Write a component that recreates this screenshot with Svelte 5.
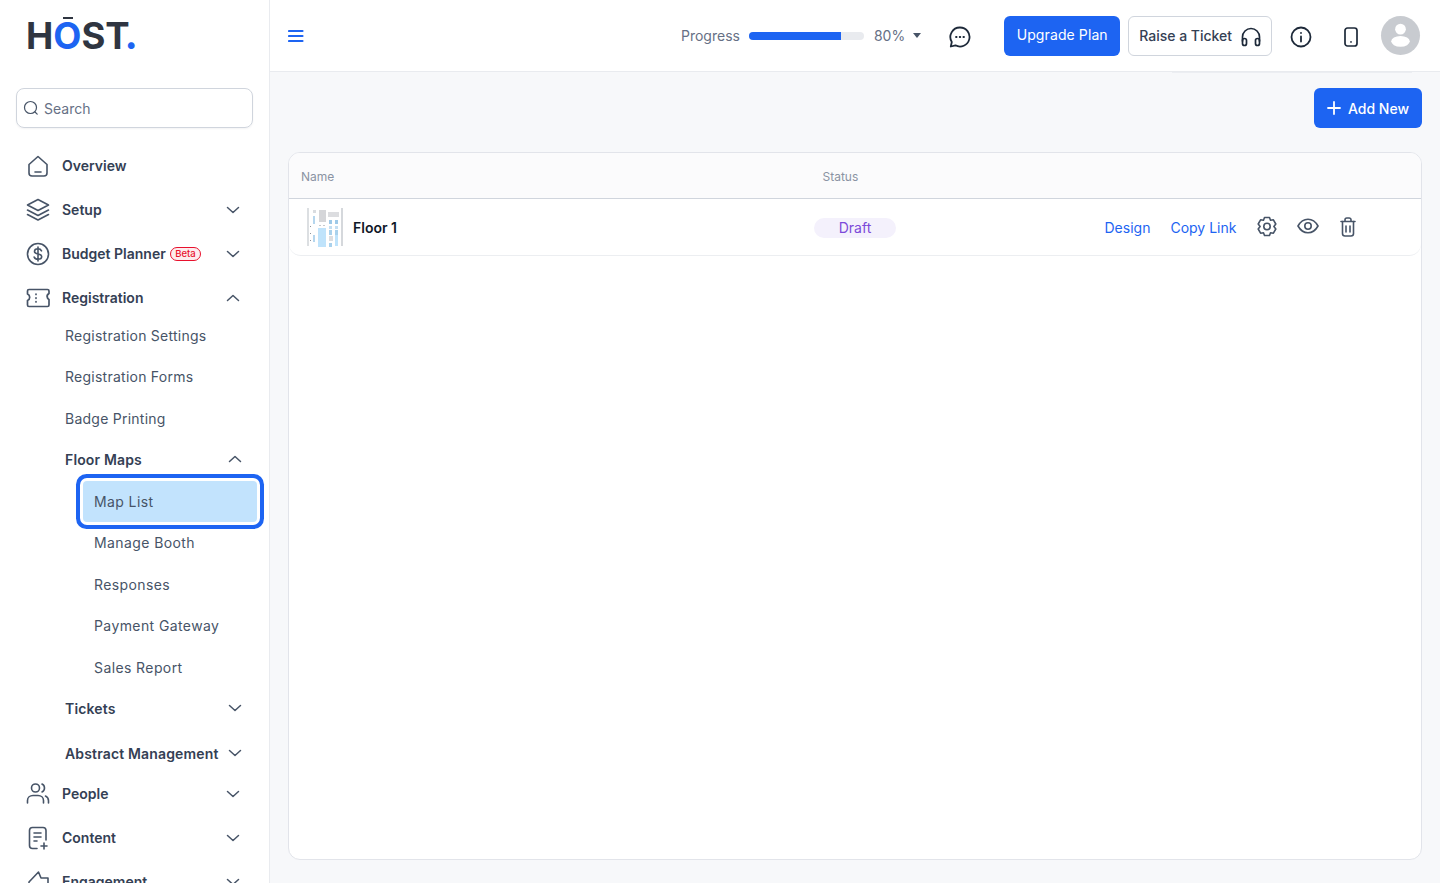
<script>
  const subItems = ["Registration Settings", "Registration Forms", "Badge Printing"];
  const mapItems = ["Manage Booth", "Responses", "Payment Gateway", "Sales Report"];
</script>

{#snippet chevron(up)}
  <svg class="chev" class:up width="16" height="16" viewBox="0 0 16 16" fill="none" stroke="#475467" stroke-width="1.5" stroke-linecap="round" stroke-linejoin="round"><path d="M2.5 5.5 8 10.5l5.5-5" /></svg>
{/snippet}

<div class="page">
  <aside class="sidebar">
    <div class="logo"><span>H</span><span class="o">O</span><span>S</span><span class="t">T</span><span class="dot">.</span></div>

    <div class="search">
      <svg width="16" height="16" viewBox="0 0 16 16" fill="none" stroke="#475467" stroke-width="1.2" stroke-linecap="round"><circle cx="7.5" cy="7.5" r="6" /><path d="m12 12 2.2 2.2" /></svg>
      <span>Search</span>
    </div>

    <nav>
      <div class="item">
        <svg class="ico" width="24" height="24" viewBox="0 0 24 24" fill="none" stroke="#475467" stroke-width="1.6" stroke-linecap="round" stroke-linejoin="round"><path d="M3 10.500 12 2.500l9 8V19a3 3 0 0 1-3 3H6a3 3 0 0 1-3-3z" /><path d="M9 18h6" /></svg>
        <span class="label">Overview</span>
      </div>
      <div class="item">
        <svg class="ico" width="24" height="24" viewBox="0 0 24 24" fill="none" stroke="#475467" stroke-width="1.6" stroke-linejoin="round" stroke-linecap="round"><path d="M12 1.500 1.500 7 12 12.500 22.500 7z" /><path d="M1.500 12 12 17.500 22.500 12" /><path d="M1.500 16.500 12 22l10.500-5.500" /></svg>
        <span class="label">Setup</span>
        {@render chevron(false)}
      </div>
      <div class="item">
        <svg class="ico" width="24" height="24" viewBox="0 0 24 24" fill="none" stroke="#475467" stroke-width="1.6" stroke-linecap="round"><circle cx="12" cy="12" r="10.500" /><path d="M15.500 8.800c-.6-1.300-2-2-3.500-2-2 0-3.500 1-3.500 2.600 0 3.600 7.200 1.600 7.200 5.200 0 1.700-1.600 2.700-3.700 2.700-1.700 0-3.200-.8-3.800-2.200M12 5v14" /></svg>
        <span class="label">Budget Planner</span>
        <span class="beta">Beta</span>
        {@render chevron(false)}
      </div>
      <div class="item">
        <svg class="ico" width="24" height="24" viewBox="0 0 24 24" fill="none" stroke="#475467" stroke-width="1.7" stroke-linejoin="round" stroke-linecap="round"><path d="M3 3.500h18.500a1.500 1.500 0 0 1 1.500 1.500v2.500a3.500 3.500 0 0 0-1.500 4.500 3.500 3.500 0 0 0 1.500 1.500V19a1.500 1.500 0 0 1-1.500 1.500H3A1.500 1.500 0 0 1 1.500 19v-4.500a3.500 3.500 0 0 0 0-6.500V5A1.500 1.500 0 0 1 3 3.500z" /><path d="M10 8v.5M10 11.800v.5M10 15.500v.5" /></svg>
        <span class="label">Registration</span>
        {@render chevron(true)}
      </div>

      <div class="sub">
        {#each subItems as label}
          <div class="sub-row">{label}</div>
        {/each}
        <div class="sub-row strong">Floor Maps {@render chevron(true)}</div>

        <div class="map-row"><div class="active">Map List</div></div>
        {#each mapItems as label}
          <div class="map-row"><div class="leaf">{label}</div></div>
        {/each}

        <div class="sub-row strong">Tickets {@render chevron(false)}</div>
        <div class="sub-row strong abstract">Abstract Management {@render chevron(false)}</div>
      </div>

      <div class="item people">
        <svg class="ico" width="24" height="24" viewBox="0 0 24 24" fill="none" stroke="#475467" stroke-width="1.6" stroke-linecap="round"><circle cx="9.500" cy="6" r="4" /><path d="M1.500 21v-2.500c0-3 2.500-5 5.500-5h5c3 0 5.500 2 5.500 5V21" /><path d="M16 2c1.500.7 2.500 2.200 2.500 4s-1 3.300-2.500 4M19.500 14c1.800.8 3 2.600 3 4.800V21" /></svg>
        <span class="label">People</span>
        {@render chevron(false)}
      </div>
      <div class="item">
        <svg class="ico" width="24" height="24" viewBox="0 0 24 24" fill="none" stroke="#475467" stroke-width="1.6" stroke-linecap="round" stroke-linejoin="round"><path d="M11 22.500H6.500a3 3 0 0 1-3-3v-15a3 3 0 0 1 3-3H17a3 3 0 0 1 3 3V14" /><path d="M8 7h7M8 11h7M8 15h3M18 17v6M15 20h6" /></svg>
        <span class="label">Content</span>
        {@render chevron(false)}
      </div>
      <div class="item">
        <svg class="ico" width="24" height="24" viewBox="0 0 24 24" fill="none" stroke="#475467" stroke-width="1.6" stroke-linecap="round" stroke-linejoin="round"><path d="M3 12 12.500 2l2.500 6h7v12H3z" /></svg>
        <span class="label">Engagement</span>
        {@render chevron(false)}
      </div>
    </nav>
  </aside>

  <div class="content">
    <header class="topbar">
      <svg class="burger" width="16" height="14" viewBox="0 0 16 14" fill="none" stroke="#1d64f2" stroke-width="2.200" stroke-linecap="round"><path d="M1 2h13.500M1 7h13.500M1 12h13.500" /></svg>

      <span class="progress-label">Progress</span>
      <div class="track"><div class="fill" style="width: 80%"></div></div>
      <span class="pct">80%</span>
      <span class="caret"></span>

      <svg class="chat" width="22" height="22" viewBox="0 0 22 22" fill="none" stroke="#1d2939" stroke-width="1.800" stroke-linejoin="round"><path d="M11 1.500a9.500 9.500 0 1 1-4.600 17.800L1.800 20.500l1-4.500A9.500 9.500 0 0 1 11 1.500z" /><path d="M7 11h.6M10.700 11h.6M14.400 11h.6" stroke-linecap="round" /></svg>

      <button class="upgrade">Upgrade Plan</button>
      <button class="ticket">
        Raise a Ticket
        <svg width="20" height="20" viewBox="0 0 20 20" fill="none" stroke="#1d2939" stroke-width="1.700" stroke-linecap="round"><path d="M1.500 14v-4a8.500 8.500 0 0 1 17 0v4" /><rect x="1.500" y="11.500" width="4" height="7" rx="2" /><rect x="14.500" y="11.500" width="4" height="7" rx="2" /></svg>
      </button>

      <svg class="info" width="22" height="22" viewBox="0 0 22 22" fill="none" stroke="#1d2939" stroke-width="1.800" stroke-linecap="round"><circle cx="11" cy="11" r="9.500" /><path d="M11 10.500v5M11 6.800v.2" /></svg>
      <svg class="phone" width="14" height="20" viewBox="0 0 14 20" fill="none" stroke="#1d2939" stroke-width="1.700" stroke-linecap="round"><rect x="1" y="1" width="12" height="18" rx="2.500" /><path d="M7 14.800v.2" /></svg>

      <div class="avatar">
        <svg width="39" height="39" viewBox="0 0 40 40" fill="#fff"><circle cx="20" cy="13.500" r="5.500" /><ellipse cx="20" cy="26" rx="9.500" ry="5.500" /></svg>
      </div>
    </header>
    <div class="strip"></div>

    <main>
      <div class="actions">
        <button class="add">
          <svg width="14" height="14" viewBox="0 0 14 14" fill="none" stroke="#fff" stroke-width="1.800" stroke-linecap="round"><path d="M7 1v12M1 7h12" /></svg>
          Add New
        </button>
      </div>

      <section class="card">
        <div class="thead">
          <span>Name</span>
          <span>Status</span>
        </div>
        <div class="row">
          <div class="name">
            <svg class="thumb" width="36" height="41" viewBox="0 0 36 41">
              <rect width="36" height="41" fill="#fff" />
              <rect x="0" y="1" width="2" height="38" fill="#dcdfe2" />
              <rect x="34" y="1" width="2" height="38" fill="#d5d8dc" />
              <rect x="6" y="3" width="3" height="3" fill="#d9dce0" />
              <rect x="12" y="3" width="7" height="12" fill="#d5d6d9" />
              <rect x="21" y="5" width="11" height="5" fill="#dcdde0" />
              <rect x="6" y="9" width="2" height="8" fill="#b5d6ee" />
              <rect x="22" y="13" width="3" height="4" fill="#9ec9e8" />
              <rect x="28" y="13" width="3" height="4" fill="#9ec9e8" />
              <rect x="22" y="19" width="3" height="3" fill="#c3def2" />
              <rect x="28" y="19" width="3" height="3" fill="#c3def2" />
              <rect x="11" y="21" width="8" height="19" fill="#bfe3fb" />
              <rect x="22" y="23" width="3" height="5" fill="#a9d1ec" />
              <rect x="28" y="23" width="3" height="5" fill="#a9d1ec" />
              <rect x="6" y="28" width="2" height="7" fill="#b5d6ee" />
              <rect x="22" y="29" width="4" height="5" fill="#dcdde0" />
              <rect x="28" y="28" width="3" height="11" fill="#bfe3fb" />
              <rect x="22" y="36" width="3" height="4" fill="#a9d1ec" />
              <rect x="12" y="18" width="2" height="1" fill="#c6c9cd" />
              <rect x="16" y="18" width="2" height="1" fill="#c6c9cd" />
              <rect x="3" y="19" width="1" height="1" fill="#8f949b" />
              <rect x="3" y="26" width="1" height="1" fill="#8f949b" />
              <rect x="3" y="33" width="1" height="1" fill="#8f949b" />
            </svg>
            <strong>Floor 1</strong>
          </div>
          <div class="status"><span class="badge">Draft</span></div>
          <div class="links">
            <a href="#design">Design</a>
            <a href="#copy">Copy Link</a>
            <svg class="gear" width="22" height="22" viewBox="0 0 22 22" fill="none" stroke="#475467" stroke-width="1.600" stroke-linejoin="round"><path d="M8.500 1.500h5l1 2.800 2.900-.5 2.400 4.200-1.900 2.500 1.900 2.500-2.400 4.200-2.900-.5-1 2.800h-5l-1-2.800-2.900.5-2.400-4.200 1.900-2.500-1.900-2.500 2.400-4.200 2.900.5z" /><circle cx="11" cy="10.500" r="3.200" /></svg>
            <svg class="eye" width="22" height="16" viewBox="0 0 22 16" fill="none" stroke="#475467" stroke-width="1.600"><path d="M1 8c2.500-4.500 6-6.800 10-6.800S18.500 3.500 21 8c-2.500 4.500-6 6.800-10 6.800S3.500 12.500 1 8z" /><circle cx="11" cy="8" r="3.200" /></svg>
            <svg class="trash" width="16" height="20" viewBox="0 0 16 20" fill="none" stroke="#475467" stroke-width="1.600" stroke-linecap="round" stroke-linejoin="round"><path d="M1 4.500h14M5 4.500V2.800A1.800 1.800 0 0 1 6.800 1h2.400A1.800 1.800 0 0 1 11 2.800v1.700" /><path d="M2.500 4.500V16.500a2.500 2.500 0 0 0 2.500 2.500h6a2.500 2.500 0 0 0 2.500-2.500V4.500" /><path d="M6 9v6M10 9v6" /></svg>
          </div>
        </div>
      </section>
    </main>
  </div>
</div>

<style>
  :global(body) {
    margin: 0;
    font-family: Inter, "Liberation Sans", sans-serif;
  }

  .page {
    display: flex;
    height: 883px;
    overflow: hidden;
    background: #f7f8fa;
  }

  .sidebar {
    width: 270px;
    flex: none;
    box-sizing: border-box;
    background: #fff;
    border-right: 1px solid #e9ebef;
    overflow: hidden;
  }

  .logo {
    display: flex;
    height: 36px;
    margin: 18px 0 0 26px;
    font-size: 36.500px;
    font-weight: 700;
    line-height: 36px;
    color: #2f3541;
  }

  .logo .o {
    position: relative;
    color: #1d64f2;
  }

  .logo .o::before {
    content: "";
    position: absolute;
    left: 10px;
    right: 8px;
    top: -1px;
    height: 2px;
    background: #2f3541;
  }

  .logo .t {
    letter-spacing: -5px;
  }

  .logo .dot {
    color: #1d64f2;
    font-weight: 800;
  }

  .search {
    display: flex;
    align-items: center;
    gap: 5px;
    box-sizing: border-box;
    width: 237px;
    height: 40px;
    margin: 34px 0 0 16px;
    padding-left: 6px;
    border: 1px solid #d0d5dd;
    border-radius: 8px;
    box-shadow: 0 1px 2px rgba(16, 24, 40, 0.05);
    font-size: 14px;
    color: #667085;
  }

  nav {
    margin-top: 16px;
    font-size: 14px;
    color: #344054;
  }

  .item {
    display: flex;
    align-items: center;
    height: 44px;
    padding-left: 26px;
    font-weight: 600;
    position: relative;
  }

  .label {
    margin-bottom: 2px;
  }

  .ico {
    flex: none;
    margin-right: 12px;
  }

  .chev {
    position: absolute;
    right: 28px;
    top: 50%;
    margin-top: -8px;
  }

  .chev.up {
    transform: rotate(180deg);
  }

  .beta {
    margin-left: 4px;
    padding: 0 4.500px;
    height: 12px;
    line-height: 12px;
    border: 1px solid #e8112d;
    border-radius: 7px;
    background: #fdecee;
    color: #e8112d;
    font-size: 9.500px;
    font-weight: 500;
  }

  .sub {
    margin-top: -5.750px;
  }

  .sub-row {
    display: flex;
    align-items: center;
    height: 41.500px;
    padding-left: 65px;
    position: relative;
    color: #475467;
    font-weight: 400;
    letter-spacing: 0.250px;
  }

  .sub-row.strong {
    color: #344054;
    font-weight: 600;
    letter-spacing: 0.150px;
  }

  .sub-row .chev {
    right: 26px;
    margin-top: -9px;
  }

  .sub-row.abstract {
    margin-top: 3.500px;
  }

  .map-row {
    height: 41.500px;
    padding-left: 83px;
    padding-right: 12px;
    display: flex;
    align-items: center;
    color: #475467;
    font-weight: 400;
    letter-spacing: 0.400px;
  }

  .leaf,
  .active {
    flex: 1;
    padding-left: 11px;
  }

  .active {
    height: 41px;
    line-height: 41px;
    border-radius: 4px;
    background: #c2e3fd;
    box-shadow: 0 0 0 3px #fff, 0 0 0 7px #1d64f2;
  }

  .people {
    margin-top: -2px;
  }

  .content {
    flex: 1;
    min-width: 0;
    position: relative;
  }

  .topbar {
    display: flex;
    align-items: center;
    box-sizing: border-box;
    height: 72px;
    padding: 0 0 0 18px;
    background: #fff;
    border-bottom: 1px solid #e9ebef;
    font-size: 14px;
  }

  .topbar > * {
    flex: none;
  }

  .strip {
    position: absolute;
    left: 902px;
    width: 240px;
    top: 72px;
    height: 1px;
    background: #eceef2;
  }

  .burger {
    margin-top: 1px;
    margin-right: 377px;
  }

  .progress-label,
  .pct {
    color: #667085;
  }

  .track {
    width: 115px;
    height: 8px;
    margin: 0 10px 0 9px;
    border-radius: 4px;
    background: #e9ebef;
    overflow: hidden;
  }

  .fill {
    height: 100%;
    background: #1d64f2;
  }

  .caret {
    margin-left: 8px;
    border: 4.500px solid transparent;
    border-top: 5px solid #475467;
    border-bottom: 0;
  }

  .chat {
    margin: 2px 0 0 28px;
  }

  button {
    font: inherit;
    cursor: pointer;
  }

  .upgrade,
  .add {
    border: 0;
    border-radius: 6px;
    background: #1d64f2;
    color: #fff;
    font-weight: 500;
    white-space: nowrap;
  }

  .upgrade {
    width: 116px;
    height: 40px;
    margin-left: 33px;
    padding: 0 0 2px;
    font-weight: 400;
    letter-spacing: 0.100px;
  }

  .ticket {
    display: flex;
    align-items: center;
    gap: 9px;
    width: 144px;
    height: 40px;
    margin-left: 8px;
    padding: 0 0 0 10px;
    border: 1px solid #d0d5dd;
    border-radius: 6px;
    background: #fff;
    color: #344054;
    font-weight: 500;
    white-space: nowrap;
  }

  .ticket svg {
    margin-top: 3px;
  }

  .info {
    margin: 2px 0 0 18px;
  }

  .phone {
    margin: 2px 0 0 32px;
  }

  .avatar {
    width: 39px;
    height: 39px;
    margin-left: 23px;
    border-radius: 50%;
    background: #c8cbd0;
  }

  main {
    padding: 16px 18px 0;
  }

  .actions {
    display: flex;
    justify-content: flex-end;
  }

  .add {
    display: flex;
    align-items: center;
    gap: 7px;
    height: 40px;
    width: 108px;
    padding: 0 0 0 13px;
    font-size: 14px;
  }

  .card {
    box-sizing: border-box;
    height: 708px;
    margin-top: 24px;
    background: #fff;
    border: 1px solid #e2e4ea;
    border-radius: 12px;
    overflow: hidden;
  }

  .thead {
    display: grid;
    grid-template-columns: 521.500px 1fr;
    align-items: center;
    height: 46px;
    box-sizing: border-box;
    padding: 1px 0 0 12px;
    background: #fbfbfc;
    border-bottom: 1px solid #d0d5dd;
    font-size: 12px;
    color: #8a93a3;
  }

  .row {
    display: grid;
    grid-template-columns: 513px 290.500px 1fr;
    align-items: center;
    height: 57px;
    box-sizing: border-box;
    padding-left: 12px;
    border-bottom: 1px solid #eceef1;
    border-radius: 0 0 12px 12px;
    font-size: 14px;
  }

  .name {
    display: flex;
    align-items: center;
    gap: 10px;
    padding-left: 6px;
    color: #101828;
  }

  .name strong {
    font-weight: 600;
  }

  .status {
    height: 20px;
    margin-top: 1px;
  }

  .badge {
    display: inline-block;
    width: 82px;
    height: 20px;
    line-height: 20px;
    border-radius: 10px;
    background: #f4f1fc;
    color: #7c4ad9;
    text-align: center;
  }

  .links {
    display: flex;
    align-items: center;
  }

  .links a {
    color: #1d64f2;
    text-decoration: none;
    margin-right: 20px;
  }

  .gear {
    margin-right: 19px;
  }

  .eye {
    margin-right: 21px;
    margin-top: -2px;
  }

  .trash {
    margin-top: -1px;
  }
</style>
